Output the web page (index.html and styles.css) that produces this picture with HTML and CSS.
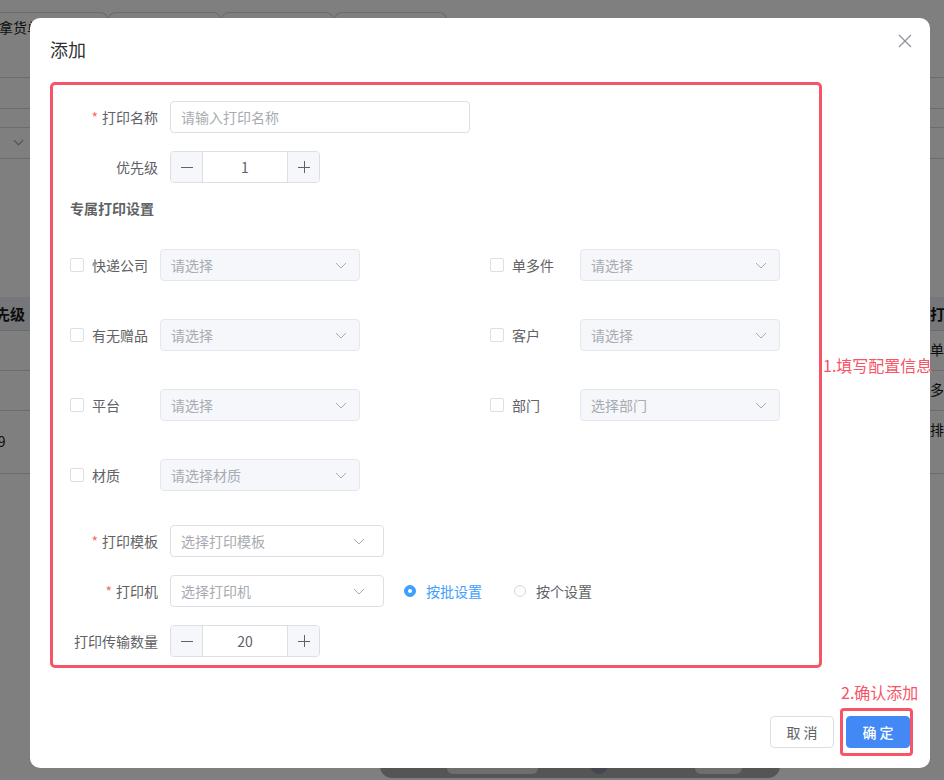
FILE: index.html
```html
<!DOCTYPE html>
<html lang="zh">
<head>
<meta charset="utf-8">
<title>添加</title>
<link rel="stylesheet" href="styles.css">
</head>
<body>
<div class="page">
  <div class="tabs">
    <div class="tab first">拿货单</div>
    <div class="tab"></div>
    <div class="tab"></div>
    <div class="tab"></div>
  </div>
  <div class="bg-row h38"></div>
  <div class="bg-row h30"></div>
  <div class="bg-row h19"></div>
  <div class="bg-row h31 with-chevron"><span class="bg-chev"></span></div>
  <div class="bg-gap"></div>
  <div class="bg-thead"><span class="left-text strong">优先级</span><span class="right-text strong">打印机</span></div>
  <div class="bg-tr r1"><span class="left-text"></span><span class="right-text">单件</span></div>
  <div class="bg-tr r2"><span class="left-text"></span><span class="right-text">多件</span></div>
  <div class="bg-tr r3"><span class="left-text lower">19</span><span class="right-text">排序</span></div>
  <div class="bg-bottom">
    <div class="pill">
      <span class="sub a"></span><span class="dot"></span><span class="sub b"></span>
    </div>
  </div>
</div>

<div class="overlay">
  <div class="dialog">
    <div class="dialog-header">
      <span class="dialog-title">添加</span>
      <svg class="close" width="14" height="14" viewBox="0 0 14 14"><path d="M1 1 L13 13 M13 1 L1 13" stroke="#909399" stroke-width="1.3" fill="none"/></svg>
    </div>

    <div class="form-box">
      <div class="annot annot-1">1.填写配置信息</div>

      <div class="form-row">
        <label class="form-label"><span class="req">*</span>打印名称</label>
        <div class="input w300"><span class="ph">请输入打印名称</span></div>
      </div>

      <div class="form-row">
        <label class="form-label">优先级</label>
        <div class="num">
          <span class="num-btn minus"><svg width="12" height="12" viewBox="0 0 12 12"><path d="M0 6.5 H12" stroke="#606266" stroke-width="1"/></svg></span>
          <span class="num-val">1</span>
          <span class="num-btn plus"><svg width="12" height="12" viewBox="0 0 12 12"><path d="M0 6.5 H12 M6.5 0 V12" stroke="#606266" stroke-width="1"/></svg></span>
        </div>
      </div>

      <div class="section-title">专属打印设置</div>

      <div class="check-grid">
        <div class="check-item">
          <span class="cb"></span><span class="cb-label">快递公司</span>
          <div class="select disabled"><span class="ph">请选择</span><svg class="chev" width="12" height="7" viewBox="0 0 12 7"><path d="M1 1 L6 6 L11 1" stroke="#a8abb2" stroke-width="1" fill="none"/></svg></div>
        </div>
        <div class="check-item">
          <span class="cb"></span><span class="cb-label">单多件</span>
          <div class="select disabled"><span class="ph">请选择</span><svg class="chev" width="12" height="7" viewBox="0 0 12 7"><path d="M1 1 L6 6 L11 1" stroke="#a8abb2" stroke-width="1" fill="none"/></svg></div>
        </div>
        <div class="check-item">
          <span class="cb"></span><span class="cb-label">有无赠品</span>
          <div class="select disabled"><span class="ph">请选择</span><svg class="chev" width="12" height="7" viewBox="0 0 12 7"><path d="M1 1 L6 6 L11 1" stroke="#a8abb2" stroke-width="1" fill="none"/></svg></div>
        </div>
        <div class="check-item">
          <span class="cb"></span><span class="cb-label">客户</span>
          <div class="select disabled"><span class="ph">请选择</span><svg class="chev" width="12" height="7" viewBox="0 0 12 7"><path d="M1 1 L6 6 L11 1" stroke="#a8abb2" stroke-width="1" fill="none"/></svg></div>
        </div>
        <div class="check-item">
          <span class="cb"></span><span class="cb-label">平台</span>
          <div class="select disabled"><span class="ph">请选择</span><svg class="chev" width="12" height="7" viewBox="0 0 12 7"><path d="M1 1 L6 6 L11 1" stroke="#a8abb2" stroke-width="1" fill="none"/></svg></div>
        </div>
        <div class="check-item">
          <span class="cb"></span><span class="cb-label">部门</span>
          <div class="select disabled"><span class="ph">选择部门</span><svg class="chev" width="12" height="7" viewBox="0 0 12 7"><path d="M1 1 L6 6 L11 1" stroke="#a8abb2" stroke-width="1" fill="none"/></svg></div>
        </div>
        <div class="check-item">
          <span class="cb"></span><span class="cb-label">材质</span>
          <div class="select disabled"><span class="ph">请选择材质</span><svg class="chev" width="12" height="7" viewBox="0 0 12 7"><path d="M1 1 L6 6 L11 1" stroke="#a8abb2" stroke-width="1" fill="none"/></svg></div>
        </div>
      </div>

      <div class="form-row tpl-row">
        <label class="form-label"><span class="req">*</span>打印模板</label>
        <div class="select w214"><span class="ph">选择打印模板</span><svg class="chev" width="12" height="7" viewBox="0 0 12 7"><path d="M1 1 L6 6 L11 1" stroke="#a8abb2" stroke-width="1" fill="none"/></svg></div>
      </div>

      <div class="form-row">
        <label class="form-label"><span class="req">*</span>打印机</label>
        <div class="select w214"><span class="ph">选择打印机</span><svg class="chev" width="12" height="7" viewBox="0 0 12 7"><path d="M1 1 L6 6 L11 1" stroke="#a8abb2" stroke-width="1" fill="none"/></svg></div>
        <div class="radios">
          <span class="radio checked"><span class="radio-dot"></span><span class="radio-label">按批设置</span></span>
          <span class="radio"><span class="radio-dot"></span><span class="radio-label">按个设置</span></span>
        </div>
      </div>

      <div class="form-row last">
        <label class="form-label">打印传输数量</label>
        <div class="num">
          <span class="num-btn minus"><svg width="12" height="12" viewBox="0 0 12 12"><path d="M0 6.5 H12" stroke="#606266" stroke-width="1"/></svg></span>
          <span class="num-val">20</span>
          <span class="num-btn plus"><svg width="12" height="12" viewBox="0 0 12 12"><path d="M0 6.5 H12 M6.5 0 V12" stroke="#606266" stroke-width="1"/></svg></span>
        </div>
      </div>
    </div>

    <div class="dialog-footer">
      <button class="btn cancel">取 消</button>
      <div class="confirm-col">
        <div class="annot annot-2">2.确认添加</div>
        <div class="confirm-frame"><button class="btn primary">确 定</button></div>
      </div>
    </div>
  </div>
</div>
</body>
</html>
```

FILE: styles.css
```css
* { box-sizing: border-box; }
html, body { margin: 0; padding: 0; }
body {
  width: 944px;
  height: 780px;
  overflow: hidden;
  font-family: "Noto Sans CJK SC", "Noto Sans", sans-serif;
  font-size: 14px;
  color: #606266;
  position: relative;
  background: #fff;
}

/* ---------- background page ---------- */
.page {
  width: 944px;
  height: 780px;
  background: #fff;
  overflow: hidden;
}
.tabs {
  margin-top: 12px;
  height: 28px;
  display: flex;
}
.tab {
  width: 113px;
  height: 28px;
  border: 1px solid #d4d6dc;
  border-bottom: none;
  border-radius: 8px 8px 0 0;
  color: #1a1a1a;
  line-height: 28px;
  font-size: 14px;
  white-space: nowrap;
}
.tab.first { margin-left: -6px; padding-left: 4px; width: 114px; }
.bg-row { border-bottom: 1px solid #d8d9dd; position: relative; }
.h38 { height: 38px; }
.h30 { height: 31px; }
.h19 { height: 19px; }
.h31 { height: 31px; }
.bg-chev {
  position: absolute;
  left: 15px;
  top: 9px;
  width: 7px;
  height: 7px;
  border-right: 1px solid #999;
  border-bottom: 1px solid #999;
  transform: rotate(45deg);
}
.bg-gap { height: 138px; }
.bg-thead, .bg-tr {
  display: flex;
  justify-content: space-between;
  border-bottom: 1px solid #d8d9dd;
  color: #1a1a1a;
}
.bg-thead { height: 34px; background: #eceef5; align-items: center; }
.bg-tr.r1 { height: 40px; padding-top: 8px; }
.bg-tr.r2 { height: 40px; padding-top: 8px; }
.bg-tr.r3 { height: 63px; padding-top: 8px; }
.left-text { margin-left: -20px; width: 60px; white-space: nowrap; }
.left-text.lower { margin-top: 12px; margin-left: -10px; }
.right-text { flex: 0 0 14px; width: 14px; white-space: nowrap; overflow: hidden; line-height: 20px; }
.strong { font-weight: 700; font-size: 15px; }
.bg-bottom {
  height: 0;
  display: flex;
  justify-content: flex-start;
}
.pill {
  margin-top: 265px;
  margin-left: 380px;
  width: 400px;
  height: 39px;
  background: #aaaaaa;
  border-radius: 12px;
  display: flex;
  align-items: flex-end;
  padding-bottom: 4px;
  flex-shrink: 0;
}
.pill .sub { display: block; height: 24px; background: #dddddd; border-radius: 6px; }
.pill .sub.a { width: 91px; margin-left: 67px; }
.pill .dot { display: block; width: 18px; height: 18px; border-radius: 50%; background: #888ca0; margin-left: 52px; }
.pill .sub.b { width: 47px; margin-left: 87px; }

/* ---------- overlay & dialog ---------- */
.overlay {
  position: absolute;
  inset: 0;
  background: rgba(0, 0, 0, 0.5);
}
.dialog {
  margin: 18px 0 0 30px;
  width: 900px;
  height: 750px;
  background: #fff;
  border-radius: 10px;
  display: flex;
  flex-direction: column;
}
.dialog-header {
  padding: 20px 18px 0 20px;
  height: 44px;
  display: flex;
  justify-content: space-between;
  align-items: flex-start;
}
.dialog-title {
  font-size: 18px;
  line-height: 22px;
  color: #303133;
}
.close { margin-top: -4px; }

.form-box {
  position: relative;
  margin: 20px 0 0 20px;
  width: 772px;
  height: 586px;
  border: 3px solid #f85468;
  border-radius: 5px;
  padding: 16px 0 0 0;
}
.annot {
  color: #f85468;
  font-size: 16px;
  line-height: 20px;
  white-space: nowrap;
}
.annot-1 {
  position: absolute;
  left: calc(100% + 4px);
  top: 270px;
}

.form-row {
  display: flex;
  align-items: center;
  height: 32px;
  margin-bottom: 18px;
}
.form-row.last { margin-bottom: 0; }
.form-label {
  width: 117px;
  padding-right: 12px;
  text-align: right;
  color: #606266;
  line-height: 32px;
  white-space: nowrap;
}
.req { color: #f56c6c; margin-right: 4px; }

.input, .select {
  height: 32px;
  border: 1px solid #dcdfe6;
  border-radius: 4px;
  background: #fff;
  display: flex;
  align-items: center;
  padding: 0 11px 0 10px;
}
.w300 { width: 300px; }
.w214 { width: 214px; }
.ph { color: #a8abb2; flex: 1; white-space: nowrap; }
.select.disabled {
  width: 200px;
  background: #f5f7fa;
  border-color: #e4e7ed;
}
.chev { flex-shrink: 0; }
.select.w214 .chev { margin-right: 7px; }
.select.disabled .chev { margin-right: 1px; }

.num {
  width: 150px;
  height: 32px;
  border: 1px solid #dcdfe6;
  border-radius: 4px;
  display: flex;
  overflow: hidden;
}
.num-btn {
  width: 32px;
  height: 30px;
  background: #f5f7fa;
  display: flex;
  align-items: center;
  justify-content: center;
}
.num-btn.minus { border-right: 1px solid #dcdfe6; }
.num-btn.plus { border-left: 1px solid #dcdfe6; }
.num-val {
  flex: 1;
  text-align: center;
  line-height: 30px;
  color: #606266;
}

.section-title {
  margin: -3px 0 31px 17px;
  line-height: 20px;
  font-weight: 700;
  color: #606266;
}

.check-grid {
  display: grid;
  grid-template-columns: 420px 300px;
  row-gap: 38px;
  padding-left: 17px;
}
.check-item {
  display: flex;
  align-items: center;
  height: 32px;
}
.cb {
  width: 14px;
  height: 14px;
  border: 1px solid #dcdfe6;
  border-radius: 2px;
  background: #fff;
  flex-shrink: 0;
}
.cb-label {
  width: 76px;
  flex-shrink: 0;
  padding-left: 8px;
  color: #606266;
  white-space: nowrap;
}
.tpl-row { margin-top: 34px; }

.radios {
  display: flex;
  align-items: center;
  margin-left: 20px;
}
.radio {
  display: flex;
  align-items: center;
  margin-right: 32px;
}
.radio-dot {
  width: 12px;
  height: 12px;
  border-radius: 50%;
  border: 1px solid #d4d7de;
  background: #fff;
  margin-right: 10px;
  position: relative;
  flex-shrink: 0;
}
.radio.checked .radio-dot {
  background: #409eff;
  border-color: #409eff;
}
.radio.checked .radio-dot::after {
  content: "";
  position: absolute;
  width: 4px;
  height: 4px;
  border-radius: 50%;
  background: #fff;
  left: 3px;
  top: 3px;
}
.radio.checked .radio-label { color: #409eff; }

.dialog-footer {
  margin-top: auto;
  display: flex;
  justify-content: flex-end;
  align-items: flex-end;
  padding: 0 17px 12px 0;
}
.btn {
  height: 32px;
  width: 64px;
  border-radius: 4px;
  font-family: "Noto Sans CJK SC", "Noto Sans", sans-serif;
  font-size: 14px;
  padding: 0;
  cursor: pointer;
}
.btn.cancel {
  background: #fff;
  border: 1px solid #dcdfe6;
  color: #606266;
  margin: 0 6px 8px 0;
}
.btn.primary {
  background: #4289f5;
  border: 1px solid #4289f5;
  color: #fff;
  font-weight: 500;
  display: block;
}
.confirm-col {
  width: 73px;
  display: flex;
  flex-direction: column;
  align-items: flex-start;
}
.annot-2 { margin-bottom: 6px; margin-left: 1px; }
.confirm-frame {
  border: 3px solid #f85468;
  border-radius: 4px;
  padding: 5px 0 5px 3px;
}
```
